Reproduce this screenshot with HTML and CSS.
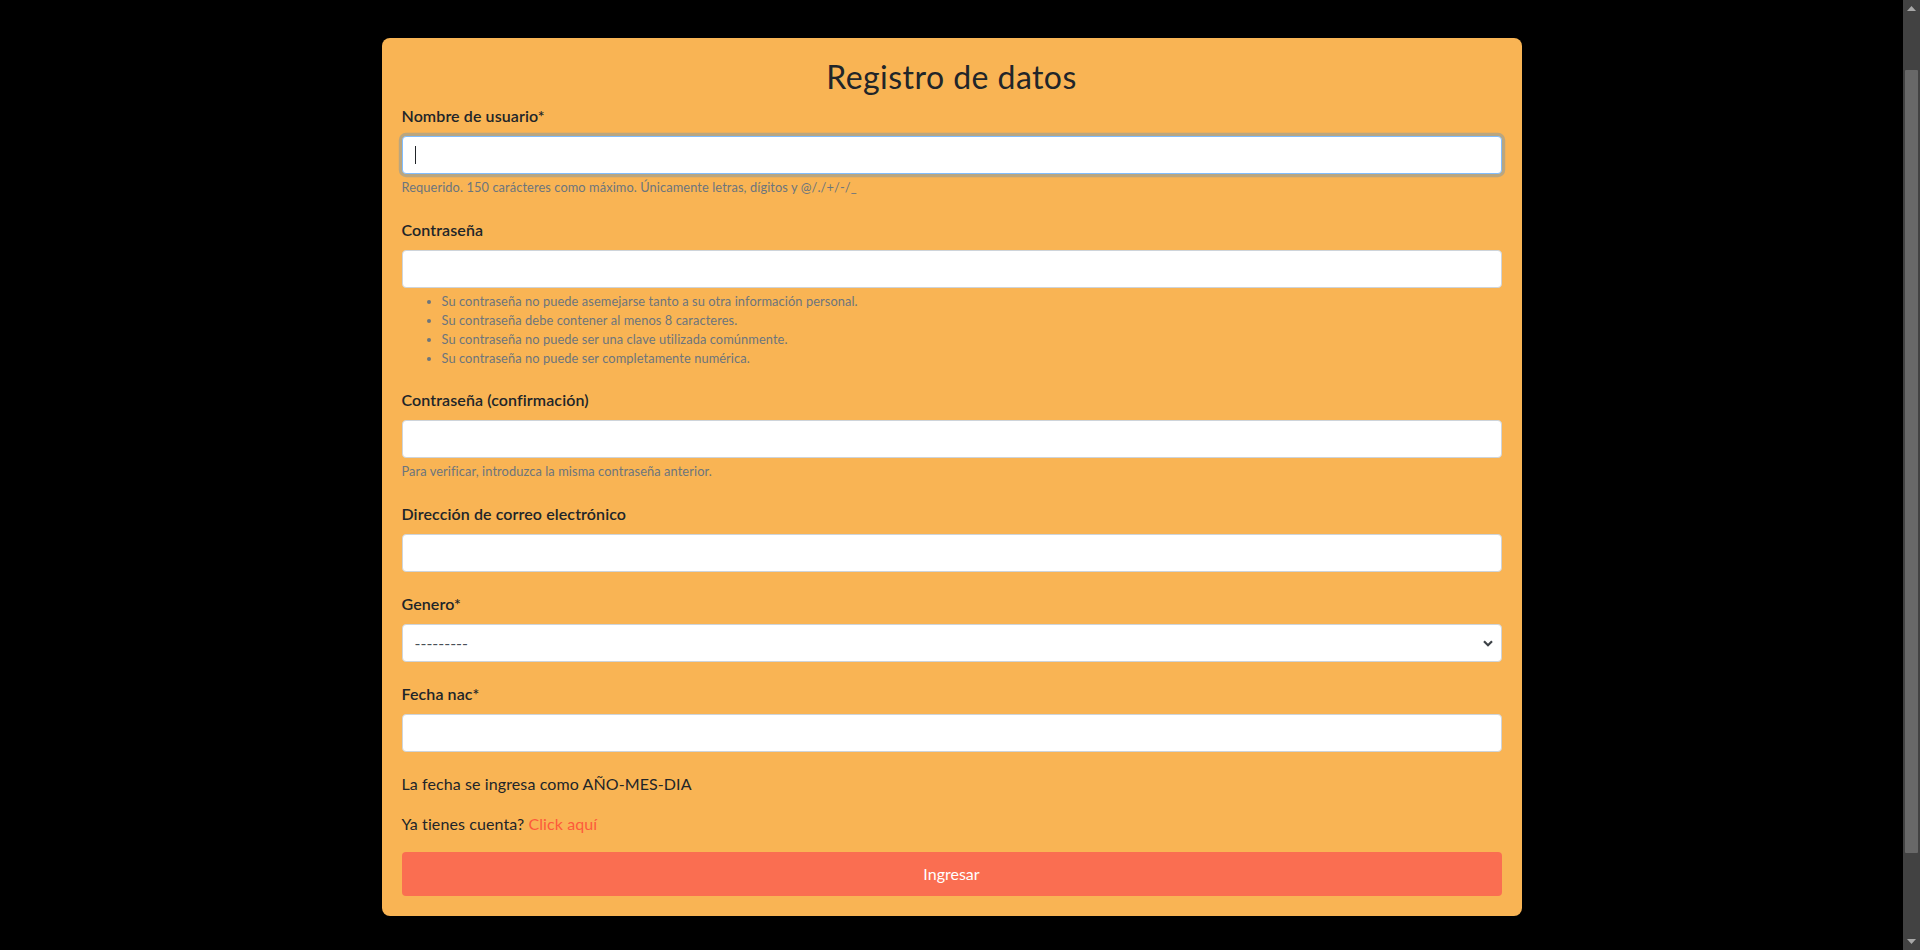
FILE: index.html
```html
<!DOCTYPE html>
<html lang="es">
<head>
<meta charset="utf-8">
<title>Registro de datos</title>
<link rel="stylesheet" href="styles.css">
</head>
<body>
<main class="page">
  <div class="container">
    <form class="card">
      <h2 class="title">Registro de datos</h2>

      <div class="group">
        <label class="label" for="username">Nombre de usuario*</label>
        <div class="field">
          <input class="control is-focused" id="username" type="text">
          <span class="caret"></span>
        </div>
        <small class="help">Requerido. 150 carácteres como máximo. Únicamente letras, dígitos y @/./+/-/_</small>
      </div>

      <div class="group">
        <label class="label" for="pw1">Contraseña</label>
        <input class="control" id="pw1" type="password">
        <small class="help">
          <ul class="help-list">
            <li>Su contraseña no puede asemejarse tanto a su otra información personal.</li>
            <li>Su contraseña debe contener al menos 8 caracteres.</li>
            <li>Su contraseña no puede ser una clave utilizada comúnmente.</li>
            <li>Su contraseña no puede ser completamente numérica.</li>
          </ul>
        </small>
      </div>

      <div class="group">
        <label class="label" for="pw2">Contraseña (confirmación)</label>
        <input class="control" id="pw2" type="password">
        <small class="help">Para verificar, introduzca la misma contraseña anterior.</small>
      </div>

      <div class="group">
        <label class="label" for="email">Dirección de correo electrónico</label>
        <input class="control" id="email" type="text">
      </div>

      <div class="group">
        <label class="label" for="genero">Genero*</label>
        <div class="field">
          <select class="control select" id="genero">
            <option>---------</option>
          </select>
          <svg class="chevron" width="10" height="7" viewBox="0 0 10 7"><path d="M1 1.2 L5 5.2 L9 1.2" fill="none" stroke="#3d4247" stroke-width="2.2"/></svg>
        </div>
      </div>

      <div class="group">
        <label class="label" for="fecha">Fecha nac*</label>
        <input class="control" id="fecha" type="text">
      </div>

      <p class="text">La fecha se ingresa como AÑO-MES-DIA</p>
      <p class="text">Ya tienes cuenta? <a class="link" href="#">Click aquí</a></p>

      <button class="btn" type="button">Ingresar</button>
    </form>
  </div>
</main>
<div class="scrollbar" aria-hidden="true">
  <div class="sb-btn"><svg width="9" height="5" viewBox="0 0 9 5"><path d="M0 5 L4.5 0 L9 5 Z" fill="#a8a8a8"/></svg></div>
  <div class="sb-gap"></div>
  <div class="sb-thumb"></div>
  <div class="sb-rest"></div>
  <div class="sb-btn"><svg width="9" height="5" viewBox="0 0 9 5"><path d="M0 0 L4.5 5 L9 0 Z" fill="#a8a8a8"/></svg></div>
</div>
</body>
</html>
```

FILE: styles.css
```css
html {
  background: #000;
}
body {
  margin: 0;
  height: 950px;
  overflow: hidden;
  display: flex;
  background: #000;
  font-family: Lato, "Open Sans", sans-serif;
  font-size: 16px;
  line-height: 1.5;
  color: #212529;
}
.page {
  flex: 1;
  padding-top: 38px;
}
.container {
  width: 1140px;
  margin: 0 auto;
}
.card {
  display: flex;
  flex-direction: column;
  background: #f9b454;
  border-radius: 8px;
  padding: 20px;
}
.title {
  margin: 0 0 8px;
  font-size: 32px;
  line-height: 38.4px;
  font-weight: 400;
  letter-spacing: 0.45px;
  text-align: center;
  color: #212529;
}
.group {
  display: flex;
  flex-direction: column;
  margin-bottom: 20px;
}
.label {
  font-weight: 600;
  margin-bottom: 8px;
  line-height: 24px;
  letter-spacing: 0.1px;
}
.field {
  position: relative;
  display: flex;
  flex-direction: column;
}
.control {
  box-sizing: border-box;
  height: 38px;
  width: 100%;
  padding: 6px 12px;
  font: inherit;
  color: #495057;
  background: #fff;
  border: 1px solid #ced4da;
  border-radius: 4px;
  outline: none;
}
.control.is-focused {
  border-color: #80bdff;
  box-shadow: 0 0 0 3.2px rgba(0, 123, 255, 0.25);
}
.caret {
  position: absolute;
  left: 13px;
  top: 10px;
  width: 1px;
  height: 18px;
  background: #212529;
}
.select {
  appearance: none;
  -webkit-appearance: none;
}
.chevron {
  position: absolute;
  right: 9px;
  top: 16px;
  pointer-events: none;
}
.help {
  display: block;
  margin-top: 4px;
  font-size: 12.8px;
  line-height: 19.2px;
  letter-spacing: 0.1px;
  color: #6c757d;
}
.help-list {
  margin: 0;
  padding-left: 40px;
}
.text {
  margin: 0 0 16px;
  letter-spacing: 0.1px;
}
.link {
  color: #fd5a3b;
  text-decoration: none;
}
.btn {
  height: 44px;
  border: none;
  border-radius: 4px;
  background: #fa6e51;
  color: #fff;
  font: inherit;
  cursor: pointer;
}
.scrollbar {
  width: 17px;
  flex: none;
  display: flex;
  flex-direction: column;
  background: #424242;
}
.sb-btn {
  height: 17px;
  flex: none;
  display: flex;
  align-items: center;
  justify-content: center;
}
.sb-gap {
  height: 53px;
  flex: none;
}
.sb-thumb {
  height: 783px;
  flex: none;
  margin: 0 2px;
  border-radius: 1px;
  background: #686868;
}
.sb-rest {
  flex: 1;
}
```
